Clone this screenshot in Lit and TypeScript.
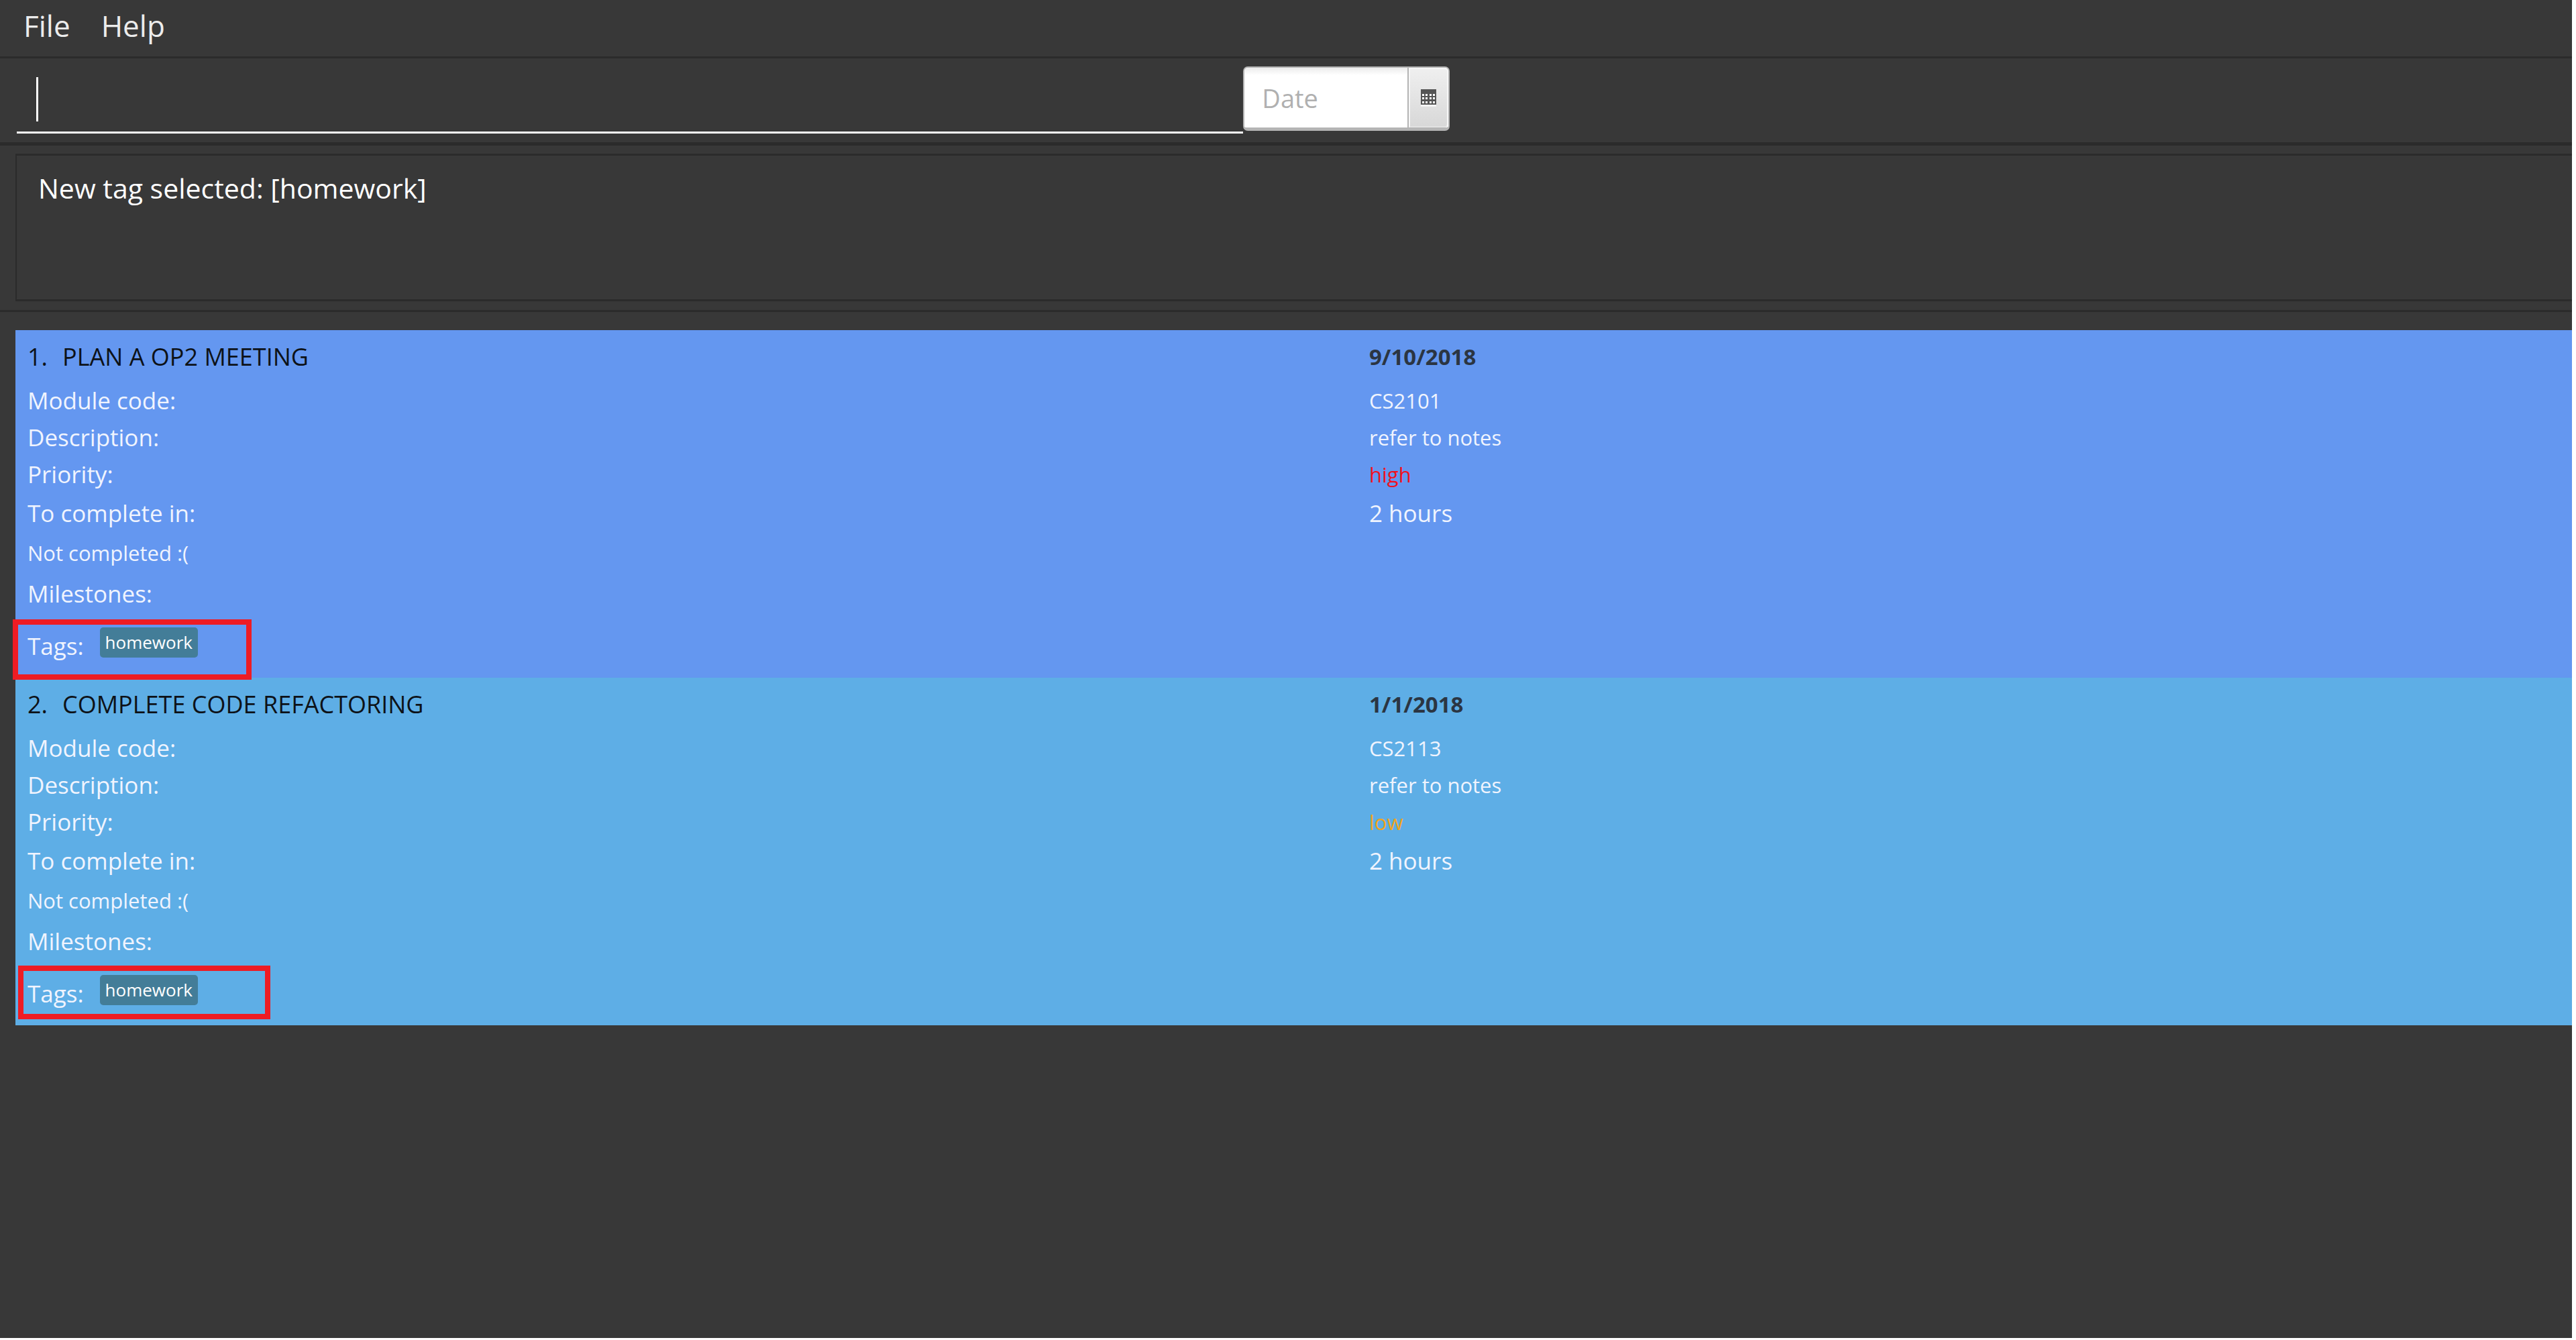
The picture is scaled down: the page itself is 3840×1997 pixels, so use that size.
import { LitElement, html, svg, css } from "lit";
import { customElement, property } from "lit/decorators.js";

interface Task {
  title: string;
  date: string;
  module: string;
  description: string;
  priority: string;
  hours: string;
  tags: string[];
}

const TASKS: Task[] = [
  { title: "PLAN A OP2 MEETING", date: "9/10/2018", module: "CS2101", description: "refer to notes", priority: "high", hours: "2 hours", tags: ["homework"] },
  { title: "COMPLETE CODE REFACTORING", date: "1/1/2018", module: "CS2113", description: "refer to notes", priority: "low", hours: "2 hours", tags: ["homework"] },
];

@customElement("task-card")
export class TaskCard extends LitElement {
  @property({ attribute: false }) task!: Task;
  @property({ type: Number }) index = 1;

  static styles = css`
    :host {
      display: block;
      position: relative;
      background: #6497f0;
      color: #f0f4fe;
      font-size: 35px;
    }
    :host([alt]) {
      background: #5eaee6;
    }
    .card {
      display: grid;
      grid-template-columns: 2000fr 1793fr;
      padding: 9px 0 0 18px;
    }
    .row {
      display: grid;
      grid-template-columns: subgrid;
      grid-column: 1 / -1;
      align-items: center;
      height: 55px;
    }
    .title {
      height: 60px;
      margin-bottom: 8px;
      color: #0d1218;
    }
    .heading {
      display: flex;
      gap: 22px;
      margin: 0;
      font-size: 36px;
      font-weight: 400;
    }
    .date {
      font-size: 33px;
      font-weight: 700;
      color: #2b3542;
    }
    .small {
      font-size: 31px;
    }
    .high {
      color: #f01020;
    }
    .low {
      color: #f0a41c;
    }
    .spaced {
      height: 60px;
    }
    .tags {
      display: flex;
      gap: 24px;
      height: 96px;
    }
    .tag {
      margin-bottom: 9px;
      padding: 4px 8px;
      border-radius: 5px;
      background: #437d98;
      color: #fff;
      font-size: 26px;
      line-height: 37px;
    }
    .mark {
      position: absolute;
      left: -4px;
      bottom: -3px;
      width: 340px;
      height: 74px;
      border: 8px solid #ee1c24;
      z-index: 1;
    }
    :host([alt]) .mark {
      left: 4px;
      bottom: 9px;
      width: 360px;
      height: 64px;
    }
  `;

  render() {
    const t = this.task;
    return html`
      <article class="card">
        <div class="row title">
          <h2 class="heading"><span>${this.index}.</span><span>${t.title}</span></h2>
          <span class="date">${t.date}</span>
        </div>
        <div class="row"><span>Module code:</span><span class="small">${t.module}</span></div>
        <div class="row"><span>Description:</span><span class="small">${t.description}</span></div>
        <div class="row"><span>Priority:</span><span class="small ${t.priority}">${t.priority}</span></div>
        <div class="row spaced"><span>To complete in:</span><span>${t.hours}</span></div>
        <div class="row spaced"><span class="small">Not completed :(</span></div>
        <div class="row spaced"><span>Milestones:</span></div>
        <div class="row tags">
          <span>Tags:</span>
          ${t.tags.map((tag) => html`<span class="tag">${tag}</span>`)}
        </div>
      </article>
      <div class="mark"></div>
    `;
  }
}

@customElement("app-root")
export class AppRoot extends LitElement {
  static styles = css`
    :host {
      display: flex;
      box-sizing: border-box;
      min-height: 100vh;
      padding: 0 6px 3px 0;
      background: #fff;
      color: #fff;
      font-family: "Open Sans", "Noto Sans", sans-serif;
    }
    .window {
      flex: 1;
      min-width: 0;
      background: #383838;
    }
    .menu {
      display: flex;
      gap: 46px;
      box-sizing: border-box;
      height: 87px;
      padding: 0 35px 8px;
      border-bottom: 3px solid #2b2b2b;
    }
    .menu button {
      padding: 0;
      border: 0;
      background: none;
      color: #ececec;
      font: 44px "Open Sans", sans-serif;
    }
    .command {
      display: flex;
      box-sizing: border-box;
      height: 130px;
      padding: 12px 0 0 25px;
      border-bottom: 5px solid #2b2b2b;
    }
    .entry {
      display: flex;
      align-items: center;
      box-sizing: border-box;
      width: 48%;
      height: 100px;
      padding-left: 29px;
      border-bottom: 3px solid #fff;
    }
    .entry input {
      flex: 1;
      min-width: 0;
      height: 66px;
      padding: 0;
      border: 0;
      border-left: 3px solid #fff;
      outline: 0;
      background: none;
      color: #fff;
      font: 41px "Open Sans", sans-serif;
    }
    .picker {
      display: flex;
      box-sizing: border-box;
      width: 308px;
      height: 96px;
      border: 2px solid #b4b4b4;
      border-bottom-width: 5px;
      border-radius: 7px;
      background: #fff;
      overflow: hidden;
    }
    .picker input {
      flex: 1;
      min-width: 0;
      padding: 0 0 0 26px;
      border: 0;
      outline: 0;
      background: linear-gradient(#ececec, #fff 11px);
      color: #333;
      font: 38px "Open Sans", sans-serif;
    }
    .picker input::placeholder {
      color: #b0b0b0;
      opacity: 1;
    }
    .picker button {
      display: grid;
      place-items: center;
      width: 59px;
      padding: 0;
      border: 2px solid #f6f6f6;
      border-bottom-color: #e2e2e2;
      border-radius: 0 5px 5px 0;
      box-shadow: -2px 0 #b4b4b4;
      background: linear-gradient(#efefef, #d8d8d8);
    }
    .icon {
      display: block;
      width: 23px;
      height: 26px;
    }
    .result {
      box-sizing: border-box;
      height: 248px;
      padding: 12px 0 13px 23px;
      border-bottom: 3px solid #2b2b2b;
    }
    .message {
      box-sizing: border-box;
      height: 220px;
      padding: 20px 32px;
      border: solid #2b2b2b;
      border-width: 3px 0 3px 2px;
      font-size: 41px;
      line-height: 56px;
    }
    .list {
      padding: 27px 0 0 23px;
    }
  `;

  render() {
    return html`
      <div class="window">
        <nav class="menu"><button>File</button><button>Help</button></nav>
        <div class="command">
          <div class="entry"><input type="text" aria-label="Command" /></div>
          <div class="picker">
            <input type="text" placeholder="Date" aria-label="Date" />
            <button aria-label="Open calendar">
              <svg class="icon" viewBox="0 0 23 26">
                <path fill="#fff" d="M0 23h23v2.500H0z" />
                <path fill="#555" d="M0 0h23v23H0z" />
                ${[7, 12, 18].map((y) =>
                  [2, 7, 13, 18].map((x) => svg`<rect x=${x} y=${y} width="3" height="3" fill="#fff" />`),
                )}
              </svg>
            </button>
          </div>
        </div>
        <section class="result"><div class="message" role="status">New tag selected: [homework]</div></section>
        <main class="list">
          ${TASKS.map((task, i) => html`<task-card .task=${task} .index=${i + 1} ?alt=${i % 2 === 1}></task-card>`)}
        </main>
      </div>
    `;
  }
}
